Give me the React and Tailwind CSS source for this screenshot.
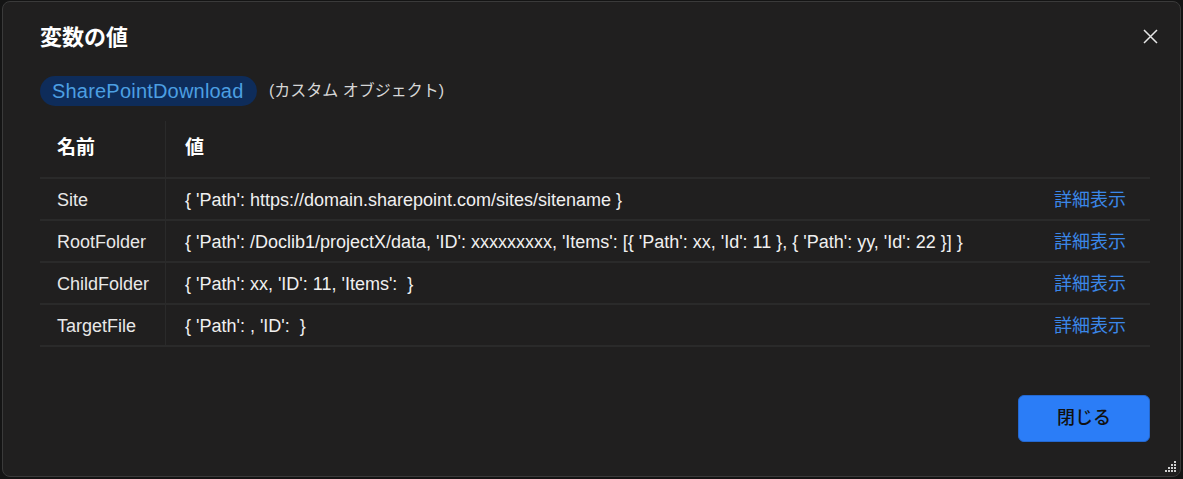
import React from "react";

const rows = [
  { name: "Site", value: "{ 'Path': https://domain.sharepoint.com/sites/sitename }" },
  {
    name: "RootFolder",
    value:
      "{ 'Path': /Doclib1/projectX/data, 'ID': xxxxxxxxx, 'Items': [{ 'Path': xx, 'Id': 11 }, { 'Path': yy, 'Id': 22 }] }",
  },
  { name: "ChildFolder", value: "{ 'Path': xx, 'ID': 11, 'Items':  }" },
  { name: "TargetFile", value: "{ 'Path': , 'ID':  }" },
];

const ResizeGrip = () => (
  <svg width="14" height="14" viewBox="0 0 14 14" className="absolute right-[3px] bottom-[3px]">
    {[
      [11, 2], [11, 5], [8, 5], [11, 8], [8, 8], [5, 8], [11, 11], [8, 11], [5, 11], [2, 11],
    ].map(([x, y], i) => (
      <rect key={i} x={x} y={y} width="2" height="2" fill="#cfcfcf" />
    ))}
  </svg>
);

const App = () => {
  return (
    <div
      className="w-[1183px] h-[479px] bg-[#141414] px-[2px] pt-[1px] pb-[2px]"
      style={{ fontFamily: '"Liberation Sans", "Noto Sans CJK JP", sans-serif' }}
    >
      <div className="relative h-full rounded-lg border border-[#3a3a3a] bg-[#201f1f] flex flex-col">
        <div className="flex items-center justify-between pl-[37px] pr-[22px] pt-[21px]">
          <h1 className="text-[22px] font-bold text-white leading-[30px]">変数の値</h1>
          <svg width="15" height="15" viewBox="0 0 15 15" className="mt-[-4px]">
            <path d="M1 1 L14 14 M14 1 L1 14" stroke="#e6e6e6" strokeWidth="1.5" />
          </svg>
        </div>

        <div className="flex items-center gap-3 pl-[37px] mt-[23px]">
          <span className="rounded-full bg-[#0e2c5a] w-[217px] pl-3 h-[30px] flex items-center text-[20px] text-[#4c9fe2] tracking-[0.2px]">
            SharePointDownload
          </span>
          <span className="text-[16px] text-[#d6d6d6]">(カスタム オブジェクト)</span>
        </div>

        <div className="ml-[37px] mr-[30px] mt-[15px]">
          <div className="flex h-[58px] border-b-2 border-[#2a2a2a]">
            <div className="w-[126px] pl-[17px] pt-[13px] border-r border-[#2a2a2a] text-[19px] font-bold text-white">
              名前
            </div>
            <div className="flex-1 pl-[19px] pt-[13px] text-[19px] font-bold text-white">値</div>
          </div>
          {rows.map((row) => (
            <div key={row.name} className="flex h-[42px] border-b-2 border-[#2a2a2a] text-[18px]">
              <div className="w-[126px] pl-[17px] pt-[2px] flex items-center border-r border-[#2a2a2a] text-[#e8e8e8]">
                {row.name}
              </div>
              <div className="flex-1 pl-[19px] pt-[2px] flex items-center text-[#f0f0f0] whitespace-pre">
                {row.value}
              </div>
              <div className="pr-[24px] pt-[2px] flex items-center text-[18px] text-[#3b87e8]">詳細表示</div>
            </div>
          ))}
        </div>

        <div className="flex-1" />
        <div className="flex justify-end pr-[30px] pb-[34px]">
          <button className="w-[132px] h-[47px] rounded-md bg-[#2b7df7] border border-[#2468d0] text-[18px] font-medium text-[#111]">
            閉じる
          </button>
        </div>
        <ResizeGrip />
      </div>
    </div>
  );
};

export default App;
